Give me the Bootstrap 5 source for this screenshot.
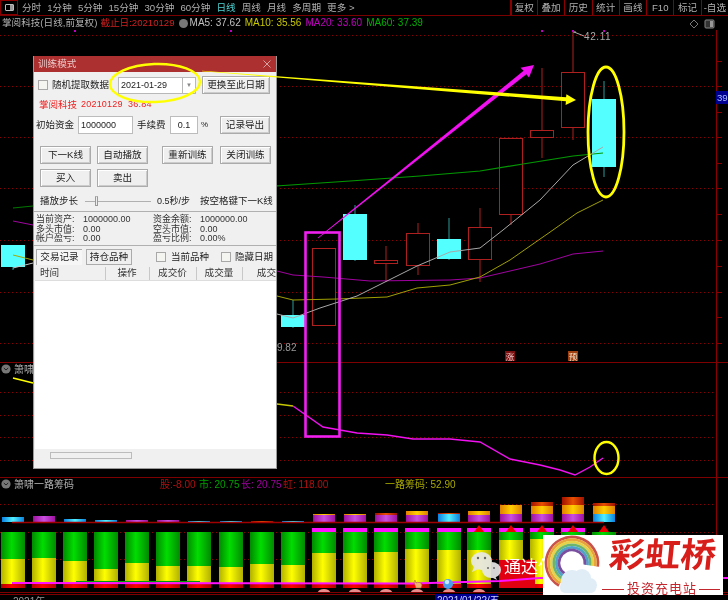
<!DOCTYPE html>
<html lang="zh-CN">
<head>
  <meta charset="UTF-8" />
  <meta name="viewport" content="width=device-width, initial-scale=1.0" />
  <title>训练模式</title>
  <link rel="stylesheet" href="https://cdn.jsdelivr.net/npm/bootstrap@5.3.2/dist/css/bootstrap.min.css">
  <style>
    html, body { margin: 0; height: 600px; overflow: hidden; background: #000; }
    body { font-family: "Liberation Sans", "Noto Sans CJK SC", sans-serif; font-size: 9.5px; line-height: 1; }
    .stage { position: relative; width: 728px; height: 600px; overflow: hidden; filter: blur(.3px); }
    .topbar { height: 16px; border-bottom: 1px solid #7a0000; color: #b0b0b0; font-size: 9.6px; }
    .side-box { width: 18px; height: 15px; border: 1px solid #8a0000; }
    .side-box i { display: block; width: 9px; height: 7px; border: 1px solid #bbb; border-radius: 1px; background: linear-gradient(90deg, #000 55%, #999 55%); }
    .periods { gap: 6.1px; margin-left: 4px; }
    .periods .on { color: #4fd6d6; }
    .tabs-r > span { width: 27.3px; height: 15px; border-left: 1px solid #8a0000; }
    .tabs-r > span:first-child { border-left-width: 2px; }
    .infobar { height: 14px; padding-left: 2px; color: #b0b0b0; font-size: 9.6px; white-space: nowrap; }
    .infobar .dead { color: #d02020; margin-left: 3px; }
    .infobar .ma { margin-left: 4px; font-size: 10px; }
    .dot-ico { width: 9px; height: 9px; margin-left: 4px; margin-right: -2px; border-radius: 50%; background: #777; }
    .c-w { color: #c0c0c0; } .c-y { color: #c8c800; } .c-m { color: #c000c0; } .c-g { color: #00b000; }
    .chart { display: block; }
    .chart text { font-family: "Liberation Sans", "Noto Sans CJK SC", sans-serif; }

    /* dialog window */
    .dlg { position: absolute; left: 33px; top: 56px; width: 244px; height: 413px; background: #f0f0f0; border: 1px solid #9a9a9a; border-top: 0; color: #222; white-space: nowrap; }
    .dlg-title { height: 16px; background: #ad3030; color: #e8c8c8; padding: 0 5px 0 4px; font-size: 9.6px; }
    .dlg-row { height: 18px; }
    .dlg-btn { height: 18px; padding: 0; font-size: 9.6px; line-height: 1; color: #222; background: #efefef; border: 1px solid #ababab; border-radius: 0; box-shadow: inset 1px 1px 0 #fff, inset -1px -1px 0 #ccc; white-space: nowrap; }
    .dlg-btn.narrow { width: 51px; margin-left: 6px; }
    .ms-gap { margin-left: 14px !important; }
    .ms-last { margin-left: 7px !important; }
    .dlg-check { width: 10px; height: 10px; margin: 0 !important; border: 1px solid #a8a8a8; border-radius: 0 !important; background-color: #f4f4f0; flex: none; }
    .lb-rand { margin-left: 4px; width: 56px; }
    .chk-a { margin-left: 4px !important; }
    .combo { width: 78px; margin-left: 10px; height: 17px; background: #fff; border: 1px solid #b8b8b8; font-size: 9px; padding-left: 2px; }
    .combo u { text-decoration: none; width: 13px; height: 100%; border-left: 1px solid #b8b8b8; color: #888; font-size: 6px; }
    .btn-date { width: 68px; margin-left: 6px; }
    .red-line { height: 15px; margin-top: 3px; margin-left: 5px; color: #f02020; }
    .red-line b { font-weight: 400; margin-left: 4px; font-size: 9px; letter-spacing: .2px; }
    .row-cash { margin-top: 4px; }
    .lb-cash { margin-left: 2px; width: 38px; }
    .dlg-inp { height: 18px; background: #fff; border: 1px solid #bcbcbc; padding: 0 2px; font-size: 9px; color: #222; }
    .inp-cash { margin-left: 4px; width: 55px; }
    .lb-fee { margin-left: 4px; width: 28px; }
    .inp-fee { margin-left: 5px; width: 28px; text-align: center; }
    .lb-pct { margin-left: 3px; width: 10px; font-size: 8px; }
    .btn-log { width: 50px; margin-left: 9px; }
    .row-a { margin-top: 12px; }
    .row-b { margin-top: 5px; }
    .row-step { margin-top: 6px; height: 16px; }
    .lb-step { margin-left: 6px; width: 37px; }
    .slider { position: relative; margin-left: 8px; width: 66px; height: 1px; background: #b0b0b0; }
    .slider i { position: absolute; left: 10px; top: -5px; width: 3px; height: 10px; background: #eee; border: 1px solid #999; border-top-color: #bbb; }
    .lb-speed { margin-left: 6px; width: 38px; font-size: 9px; }
    .lb-space { margin-left: 5px; }
    .stats { margin-top: 2px; height: 35px; padding: 3px 0 0 2px; border-top: 1px solid #b0b0b0; border-bottom: 1px solid #b0b0b0; display: grid; grid-template-columns: 47px 70px 47px auto; grid-auto-rows: 9.4px; align-items: center; font-size: 9px; color: #333; }
    .stats span { white-space: nowrap; }
    .row-tabs { height: 21px; }
    .tab-a, .tab-b { height: 16px; width: 46px; padding: 0; font-size: 9.6px; line-height: 1; border-radius: 0; color: #222; white-space: nowrap; }
    .tab-a { margin-left: 2px; background: #f6f6f6; border: 0; border-left: 1px solid #aaa; border-top: 1px solid #aaa; }
    .tab-b { margin-left: 4px; background: #efefef; border: 1px solid #ababab; }
    .chk-b { margin-left: 24px !important; }
    .chk-c { margin-left: 12px !important; }
    .lb-chk { margin-left: 5px; width: 38px; }
    .lb-chk2 { margin-left: 4px; width: 38px; }
    .grid-wrap { height: 182px; margin-left: 1px; background: #fff; overflow: hidden; }
    .head-tbl { width: 242px; table-layout: fixed; background: #f0f0f0; }
    .head-tbl th { height: 13px; padding: 0; font-weight: 400; font-size: 9.6px; color: #333; text-align: center; background: #f0f0f0; border-bottom: 1px solid #ddd; border-right: 1px solid #c8c8c8; }
    .col-t { width: 70px; } .col-o { width: 44px; } .col-p { width: 47px; } .col-v { width: 46px; }
    .head-tbl th.col-t { text-align: left; padding-left: 5px; }
    .head-tbl th.col-x { text-align: right; padding-right: 1px; border-right: 0; }
    .scroll-h { height: 14px; margin-left: 1px; padding-top: 3px; background: #f0f0f0; }
    .scroll-h i { display: block; margin-left: 15px; width: 82px; height: 7px; background: #f0f0f0; border: 1px solid #bcbcbc; }
    .over { position: absolute; left: 0; top: 0; pointer-events: none; }
  </style>
</head>
<body>
<div class="stage">
  <div class="topbar d-flex align-items-center">
    <div class="side-box d-flex align-items-center justify-content-center"><i></i></div>
    <div class="periods d-flex">
      <span>分时</span><span>1分钟</span><span>5分钟</span><span>15分钟</span><span>30分钟</span><span>60分钟</span>
      <span class="on">日线</span><span>周线</span><span>月线</span><span>多周期</span><span>更多 &gt;</span>
    </div>
    <div class="tabs-r ms-auto d-flex">
      <span class="d-flex align-items-center justify-content-center">复权</span>
      <span class="d-flex align-items-center justify-content-center">叠加</span>
      <span class="d-flex align-items-center justify-content-center">历史</span>
      <span class="d-flex align-items-center justify-content-center">统计</span>
      <span class="d-flex align-items-center justify-content-center">画线</span>
      <span class="d-flex align-items-center justify-content-center">F10</span>
      <span class="d-flex align-items-center justify-content-center">标记</span>
      <span class="d-flex align-items-center justify-content-center">-自选</span>
    </div>
  </div>
  <div class="infobar d-flex align-items-center">
    <span>掌阅科技(日线,前复权)</span>
    <span class="dead">截止日:20210129</span>
    <span class="dot-ico"></span>
    <span class="ma c-w">MA5: 37.62</span>
    <span class="ma c-y">MA10: 35.56</span>
    <span class="ma c-m">MA20: 33.60</span>
    <span class="ma c-g">MA60: 37.39</span>
  </div>

  <svg class="chart" width="728" height="570" viewBox="0 30 728 570">
    <defs>
      <linearGradient id="gy"><stop offset="0" stop-color="#b0b000"/><stop offset=".45" stop-color="#ffff00"/><stop offset="1" stop-color="#b0b000"/></linearGradient>
      <linearGradient id="gg"><stop offset="0" stop-color="#008a00"/><stop offset=".45" stop-color="#00dd00"/><stop offset="1" stop-color="#008a00"/></linearGradient>
      <linearGradient id="gr"><stop offset="0" stop-color="#b00000"/><stop offset=".45" stop-color="#ff0000"/><stop offset="1" stop-color="#b00000"/></linearGradient>
      <linearGradient id="gc"><stop offset="0" stop-color="#0a80e0"/><stop offset=".5" stop-color="#50f0ff"/><stop offset="1" stop-color="#0a80e0"/></linearGradient>
      <linearGradient id="gp"><stop offset="0" stop-color="#a010a0"/><stop offset=".5" stop-color="#c850e0"/><stop offset="1" stop-color="#a010a0"/></linearGradient>
      <linearGradient id="go"><stop offset="0" stop-color="#e08000"/><stop offset=".5" stop-color="#ffd000"/><stop offset="1" stop-color="#e08000"/></linearGradient>
      <linearGradient id="gd"><stop offset="0" stop-color="#a01000"/><stop offset=".5" stop-color="#e85000"/><stop offset="1" stop-color="#a01000"/></linearGradient>
    </defs>
    <g id="grid"></g>
    <g id="candles"></g>
    <g fill="none" stroke-width="1">
      <polyline stroke="#007800" points="13,208 33,206"/>
      <polyline stroke="#009a00" stroke-width="1.2" points="276,186 350,181 420,176 480,171 523,164 573,156 603,153"/>
      <polyline stroke="#a000a0" points="13,221 33,225"/>
      <polyline stroke="#a000a0" points="277,271 293,275 323,277 370,281 450,280 480,278 540,264 573,254 603,251"/>
      <polyline stroke="#a8a800" points="13,255 33,260"/>
      <polyline stroke="#a0a000" points="277,296 293,300 337,299 387,297 417,288 450,285 480,277 510,260 553,230 577,213 603,200"/>
      <polyline stroke="#c8c8c8" points="13,268 33,263"/>
      <polyline stroke="#a8a8a8" points="277,314 293,318 320,308 357,296 387,281 417,266 450,252 480,248 503,230 540,200 573,165 603,147"/>
    </g>
    <polyline fill="none" stroke="#ffff00" stroke-width="1.4" points="13,378 33,383"/>
    <polyline fill="none" stroke="#c8c800" stroke-width="1.4" points="277,404 293,406"/>
    <polyline fill="none" stroke="#f010f0" stroke-width="1.4" points="293,406 323,427 357,433 387,435 413,439 450,439 480,442 510,459 540,465 560,470 575,475 590,467 603,458"/>

    <circle cx="6" cy="369" r="4.6" fill="#777"/><path d="M3.8 368l2.2 2 2.2-2" fill="none" stroke="#222"/>
    <text x="14" y="373" font-size="10" fill="#b0b0b0">箫啸</text>
    <circle cx="6" cy="484" r="4.6" fill="#777"/><path d="M3.8 483l2.2 2 2.2-2" fill="none" stroke="#222"/>
    <text x="14" y="488" font-size="10" fill="#b0b0b0">箫啸一路筹码</text>
    <text x="160" y="488" font-size="10" fill="#b01010">股:-8.00</text>
    <text x="199" y="488" font-size="10" fill="#00a000">市: 20.75</text>
    <text x="241" y="488" font-size="10" fill="#a000a0">长: 20.75</text>
    <text x="283" y="488" font-size="10" fill="#b01010">虹: 118.00</text>
    <text x="385" y="488" font-size="10" fill="#a8a800">一路筹码: 52.90</text>
    <text x="277" y="351" font-size="10" fill="#999">9.82</text>
    <text x="584" y="40" font-size="10" fill="#aaa" letter-spacing=".6">42.11</text>
    <path d="M573 32h3M574 32l10 4" stroke="#aaa" fill="none"/>

    <rect x="505" y="351" width="10" height="10" fill="#7a1010"/><text x="510" y="359.5" font-size="8.5" text-anchor="middle" fill="#f0c8c8">涨</text>
    <rect x="568" y="351" width="10" height="10" fill="#a04010"/><text x="573" y="359.5" font-size="8.5" text-anchor="middle" fill="#f0e0c8">预</text>

    <g fill="#c000c0"><rect x="74" y="30" width="2" height="2"/><rect x="230" y="30" width="2" height="2"/><rect x="541" y="30" width="2" height="2"/><rect x="572" y="30" width="2" height="2"/><rect x="603" y="30" width="2" height="2"/></g>

    <rect x="716" y="91" width="12" height="13" fill="#000090"/>
    <text x="717" y="101" font-size="9.6" fill="#a8b8ff">39</text>

    <rect x="499" y="560" width="36" height="28" fill="#e00010"/>
    <polyline fill="none" stroke="#00a000" stroke-width="1.2" points="76,581.5 200,581.5"/>
    <polyline fill="none" stroke="#ff10ff" stroke-width="2" points="12,583 412,583.5 500,581 540,578 728,578"/>

    <g fill="#e8e8e8" opacity=".92">
      <ellipse cx="481.5" cy="561" rx="10.5" ry="9"/><path d="M474 567l-2 5 6-3z"/>
      <ellipse cx="491.5" cy="570" rx="9.5" ry="8"/><path d="M495 576l2 4-6-3z"/>
    </g>
    <g fill="#666"><circle cx="478" cy="558" r="1.2"/><circle cx="485" cy="558" r="1.2"/><circle cx="488" cy="568" r="1"/><circle cx="494" cy="568" r="1"/></g>
    <text x="504" y="573" font-size="17" fill="#fff">通达信</text>

    <path d="M414 582l2 6h5l1-3-2-3-1 1-1-1-2 1-1-3z" fill="#f0b070" stroke="#a06030" stroke-width=".5"/>
    <circle cx="448" cy="584" r="5" fill="#4aa0f0"/><circle cx="447" cy="582" r="2.2" fill="#c8e8ff"/>

    <text x="13" y="605" font-size="10" fill="#999">2021年</text>
    <rect x="435" y="594" width="62" height="7" fill="#000090"/>
    <text x="437" y="604" font-size="10" fill="#c8d0ff">2021/01/22/五</text>
  </svg>

  <div class="dlg">
    <div class="dlg-title d-flex align-items-center justify-content-between">
      <span>训练模式</span>
      <svg width="8" height="8" viewBox="0 0 8 8"><path d="M.5.5l7 7M7.5.5l-7 7" stroke="#d8a0a0" fill="none"/></svg>
    </div>
    <div class="dlg-row d-flex align-items-center mt-1">
      <input type="checkbox" class="form-check-input dlg-check chk-a">
      <span class="lb-rand">随机提取数据</span>
      <div class="combo d-flex align-items-center justify-content-between">2021-01-29<u class="d-flex align-items-center justify-content-center">▼</u></div>
      <button class="btn dlg-btn btn-date">更换至此日期</button>
    </div>
    <div class="red-line d-flex align-items-center">掌阅科技<b>20210129&nbsp;&nbsp;36.84</b></div>
    <div class="dlg-row row-cash d-flex align-items-center">
      <span class="lb-cash">初始资金</span>
      <div class="dlg-inp inp-cash d-flex align-items-center">1000000</div>
      <span class="lb-fee">手续费</span>
      <div class="dlg-inp inp-fee d-flex align-items-center justify-content-center">0.1</div>
      <span class="lb-pct">%</span>
      <button class="btn dlg-btn btn-log">记录导出</button>
    </div>
    <div class="dlg-row row-a d-flex">
      <button class="btn dlg-btn narrow">下一K线</button>
      <button class="btn dlg-btn narrow">自动播放</button>
      <button class="btn dlg-btn narrow ms-gap">重新训练</button>
      <button class="btn dlg-btn narrow ms-last">关闭训练</button>
    </div>
    <div class="dlg-row row-b d-flex">
      <button class="btn dlg-btn narrow">买入</button>
      <button class="btn dlg-btn narrow">卖出</button>
    </div>
    <div class="row-step d-flex align-items-center">
      <span class="lb-step">播放步长</span>
      <div class="slider"><i></i></div>
      <span class="lb-speed">0.5秒/步</span>
      <span class="lb-space">按空格键下一K线</span>
    </div>
    <div class="stats">
      <span>当前资产:</span><span>1000000.00</span><span>资金余额:</span><span>1000000.00</span>
      <span>多头市值:</span><span>0.00</span><span>空头市值:</span><span>0.00</span>
      <span>帐户盈亏:</span><span>0.00</span><span>盈亏比例:</span><span>0.00%</span>
    </div>
    <div class="row-tabs d-flex align-items-center">
      <button class="btn tab-a">交易记录</button>
      <button class="btn tab-b">持仓品种</button>
      <input type="checkbox" class="form-check-input dlg-check chk-b">
      <span class="lb-chk">当前品种</span>
      <input type="checkbox" class="form-check-input dlg-check chk-c">
      <span class="lb-chk2">隐藏日期</span>
    </div>
    <div class="grid-wrap">
      <table class="head-tbl mb-0">
        <thead>
          <tr><th class="col-t">时间</th><th class="col-o">操作</th><th class="col-p">成交价</th><th class="col-v">成交量</th><th class="col-x">成交</th></tr>
        </thead>
      </table>
    </div>
    <div class="scroll-h"><i></i></div>
  </div>

  <svg class="over" width="728" height="600" viewBox="0 0 728 600">
    <path d="M694 20l4 4-4 4-4-4z" fill="none" stroke="#777"/>
    <rect x="705" y="20" width="9" height="8" rx="1" fill="#333" stroke="#888"/><rect x="710" y="21" width="3" height="6" fill="#999"/>
    <ellipse cx="155" cy="83" rx="45" ry="19" fill="none" stroke="#ffff00" stroke-width="2.4" transform="rotate(-2 155 83)"/>
    <ellipse cx="606" cy="132" rx="18" ry="65" fill="none" stroke="#ffff00" stroke-width="2.8"/>
    <ellipse cx="606.5" cy="458" rx="12" ry="16" fill="none" stroke="#ffff00" stroke-width="2.4"/>
    <rect x="305.5" y="232.5" width="34" height="204" fill="none" stroke="#f020f0" stroke-width="2.6"/>
    <polygon fill="#f010f0" points="318.25,238.3 526.4,74.2 529,77.5 534,65 520.5,67.7 523.6,70.8 317.75,237.7"/>
    <polygon fill="#ffff00" points="202,71.3 565.9,101.2 565.6,105 576,100 566.4,94.2 566.1,97.2 202,70.7"/>

    <rect x="543" y="535" width="180" height="60" fill="#fff"/>
    <g id="rainbow" fill="none" stroke-width="2.7"></g>
    <g fill="#e0edf6"><circle cx="572" cy="581" r="11"/><circle cx="582" cy="578" r="9"/><circle cx="590" cy="585" r="7"/><rect x="560" y="582" width="36" height="11" rx="5"/></g>
    <text font-size="34" font-weight="700" fill="#d81e1a" font-family="'Noto Sans CJK SC', sans-serif" textLength="107" lengthAdjust="spacingAndGlyphs" transform="translate(608 567) skewX(-6)">彩虹桥</text>
    <path d="M602 589.5h22M699 589.5h21" stroke="#c4262e" fill="none"/>
    <text x="627" y="593" font-size="13" fill="#c4262e" font-family="'Noto Sans CJK SC', sans-serif" textLength="69">投资充电站</text>
  </svg>
</div>

<script src="https://cdn.jsdelivr.net/npm/bootstrap@5.3.2/dist/js/bootstrap.bundle.min.js"></script>
<script>
  const rect = (x, y, w, h, fill, extra = '') => `<rect x="${x}" y="${y}" width="${w}" height="${h}" fill="${fill}" ${extra}/>`;

  // grid lines
  let grid = '';
  [35, 86, 137, 188, 240, 292, 343, 392, 415, 437, 460, 504, 532, 559].forEach(y => {
    grid += `<line x1="0" x2="716" y1="${y + .5}" y2="${y + .5}" stroke="#8a0000" stroke-dasharray="1 3"/>`;
  });
  [362, 477, 592, 594].forEach(y => {
    grid += `<line x1="0" x2="728" y1="${y + .5}" y2="${y + .5}" stroke="#7e0000"/>`;
  });
  grid += `<line x1="716.5" x2="716.5" y1="30" y2="595" stroke="#8a0000"/>`;
  [61, 86, 112, 137, 163, 188, 214, 240, 266, 292, 317, 343].forEach(y => {
    grid += `<line x1="716" x2="722" y1="${y + .5}" y2="${y + .5}" stroke="#8a0000"/>`;
  });
  document.getElementById('grid').innerHTML = grid;

  // candles: x, top, bottom, wickTop, wickBottom, up (red hollow)
  const candles = [
    [1, 245, 267, 245, 270, 0], [281, 315, 327, 300, 328, 0], [312, 248, 325, 248, 325, 1],
    [343, 214, 260, 205, 261, 0], [374, 260, 263, 246, 282, 1], [406, 233, 265, 223, 275, 1],
    [437, 239, 259, 218, 260, 0], [468, 227, 259, 208, 282, 1], [499, 138, 214, 138, 225, 1],
    [530, 130, 137, 68, 158, 1], [561, 72, 127, 32, 140, 1], [592, 99, 167, 81, 177, 0]
  ];
  let html = '';
  candles.forEach(([x, t, b, wt, wb, up]) => {
    const mid = x + 12, col = up ? '#ae2020' : '#2a9a9a';
    html += `<line x1="${mid}" x2="${mid}" y1="${wt}" y2="${wb}" stroke="${col}"/>`;
    html += up ? rect(x + .5, t + .5, 23, b - t, '#000', `stroke="${col}"`) : rect(x, t, 24, b - t, '#54ffff');
  });

  // chip bars along the bottom pane
  const xs = [1, 32, 63, 94, 125, 156, 187, 219, 250, 281, 312, 343, 374, 405, 437, 467, 499, 530, 561, 592];
  const yellowTop = [559, 558, 561, 569, 563, 566, 566, 567, 564, 565, 553, 553, 552, 549, 550, 550, 540, 539, 538, 540];
  // stacked stubs above the red line: [top, gradient], each runs down to the next one
  const stubs = [
    [[517, 'gc']], [[516, 'gp']], [[519, 'gc']], [[520, 'gc']], [[520, 'gp']],
    [[520, 'gp']], [[521, 'gc']], [[521, 'gc']], [[521, 'gd']], [[521, 'gc']],
    [[514, 'go'], [515, 'gp']], [[514, 'go'], [515, 'gp']], [[513, 'gd'], [515, 'gp']],
    [[511, 'go'], [515, 'gp']], [[513, 'gd'], [514, 'gc']], [[511, 'go'], [515, 'gp']],
    [[505, 'go'], [514, 'gp']], [[502, 'gd'], [506, 'go'], [514, 'gp']],
    [[497, 'gd'], [505, 'go'], [514, 'gp']], [[503, 'gd'], [506, 'go'], [514, 'gc']]
  ];
  xs.forEach((x, i) => {
    stubs[i].forEach(([top, g], j) => {
      const next = stubs[i][j + 1] ? stubs[i][j + 1][0] : 522;
      html += rect(x + 1, top, 22, next - top, `url(#${g})`);
    });
    html += rect(x, 532, 24, yellowTop[i] - 532, 'url(#gg)');
    html += rect(x, yellowTop[i], 24, 584 - yellowTop[i], 'url(#gy)');
    html += rect(x, 584, 24, 4, 'url(#gr)');
    if (i >= 10 && i < 19) html += rect(x, 528, 24, 4, '#ff10ff');
    if (i >= 15) html += `<path d="M${x + 12} 525l5 7h-10z" fill="#e80000"/>`;
    if (i >= 10 && i < 16) html += `<path d="M${x + 6} 592a6 3 0 0 1 12 0z" fill="#e88a8a"/>`;
  });
  html += `<line x1="12" x2="604" y1="522.5" y2="522.5" stroke="#a00000" stroke-width="1.4"/>`;
  document.getElementById('candles').innerHTML = html;

  // logo rainbow
  const colors = ['#c9524a', '#e8a33c', '#e6d24a', '#6db56d', '#4fa3c9', '#7b4fa0'];
  const pt = (r, deg) => [572 + r * Math.cos(deg * Math.PI / 180), 563 + r * Math.sin(deg * Math.PI / 180)];
  document.getElementById('rainbow').innerHTML = colors.map((c, i) => {
    const r = 26 - i * 2.6, [x1, y1] = pt(r, 120), [x2, y2] = pt(r, 8);
    return `<path d="M${x1} ${y1}A${r} ${r} 0 1 1 ${x2} ${y2}" stroke="${c}"/>`;
  }).join('');
</script>
</body>
</html>
